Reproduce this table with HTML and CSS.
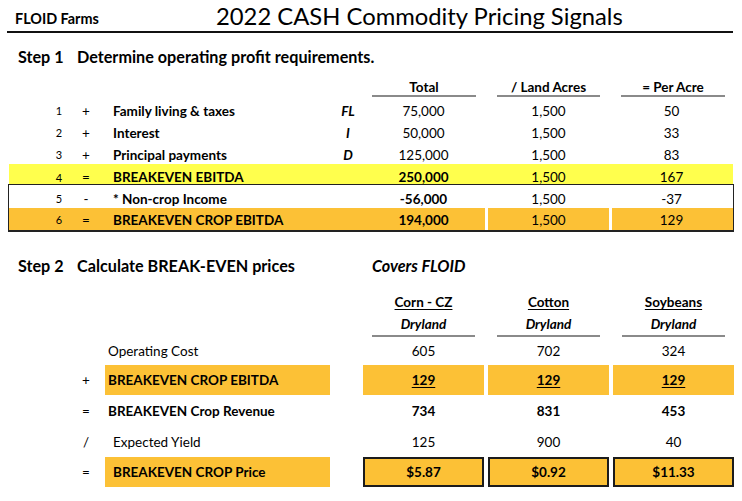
FILE: index.html
```html
<!DOCTYPE html>
<html>
<head>
<meta charset="utf-8">
<link rel="stylesheet" href="styles.css">
</head>
<body>
<div class="page">
  <header class="top">
    <div class="farm">FLOID Farms</div>
    <h1 class="title">2022 CASH Commodity Pricing Signals</h1>
  </header>

  <div class="step s1"><span class="step-no">Step 1</span><span>Determine operating profit requirements.</span></div>

  <div class="t1">
    <div class="row1 hdr">
      <span class="c-num"></span><span class="c-sign"></span><span class="c-label"></span><span class="c-code"></span>
      <span class="c-v1"><span class="ul">Total</span></span><span class="gap"></span>
      <span class="c-v2"><span class="ul">/ Land Acres</span></span><span class="gap"></span>
      <span class="c-v3"><span class="ul">= Per Acre</span></span>
    </div>
    <div class="row1 r-a">
      <span class="c-num">1</span><span class="c-sign">+</span><span class="c-label">Family living &amp; taxes</span><span class="c-code">FL</span>
      <span class="c-v1">75,000</span><span class="gap"></span><span class="c-v2">1,500</span><span class="gap"></span><span class="c-v3">50</span>
    </div>
    <div class="row1 r-a">
      <span class="c-num">2</span><span class="c-sign">+</span><span class="c-label">Interest</span><span class="c-code">I</span>
      <span class="c-v1">50,000</span><span class="gap"></span><span class="c-v2">1,500</span><span class="gap"></span><span class="c-v3">33</span>
    </div>
    <div class="row1 r-b">
      <span class="c-num">3</span><span class="c-sign">+</span><span class="c-label">Principal payments</span><span class="c-code">D</span>
      <span class="c-v1">125,000</span><span class="gap"></span><span class="c-v2">1,500</span><span class="gap"></span><span class="c-v3">83</span>
    </div>
    <div class="row1 r-yellow">
      <span class="c-num">4</span><span class="c-sign">=</span><span class="c-label">BREAKEVEN EBITDA</span><span class="c-code"></span>
      <span class="c-v1 b">250,000</span><span class="gap"></span><span class="c-v2">1,500</span><span class="gap"></span><span class="c-v3">167</span>
    </div>
    <div class="box">
      <div class="row1 r-5">
        <span class="c-num">5</span><span class="c-sign">-</span><span class="c-label">* Non-crop Income</span><span class="c-code"></span>
        <span class="c-v1 b">-56,000</span><span class="gap"></span><span class="c-v2">1,500</span><span class="gap"></span><span class="c-v3">-37</span>
      </div>
      <div class="row1 r-orange">
        <span class="c-num">6</span><span class="c-sign">=</span><span class="c-label">BREAKEVEN CROP EBITDA</span><span class="c-code"></span>
        <span class="c-v1 b">194,000</span><span class="gap white"></span><span class="c-v2">1,500</span><span class="gap white"></span><span class="c-v3">129</span>
      </div>
    </div>
  </div>

  <div class="step s2"><span class="step-no">Step 2</span><span class="step-text">Calculate BREAK-EVEN prices</span><span class="covers">Covers FLOID</span></div>

  <div class="t2">
    <div class="row2 crop">
      <span class="c2-sign"></span><span class="c2-label"></span>
      <span class="c2-v"><span class="u">Corn - CZ</span></span>
      <span class="c2-v"><span class="u">Cotton</span></span>
      <span class="c2-v"><span class="u">Soybeans</span></span>
    </div>
    <div class="row2 dry">
      <span class="c2-sign"></span><span class="c2-label"></span>
      <span class="c2-v"><span class="dl">Dryland</span></span>
      <span class="c2-v"><span class="dl">Dryland</span></span>
      <span class="c2-v"><span class="dl">Dryland</span></span>
    </div>
    <div class="row2 r2-op">
      <span class="c2-sign"></span><span class="c2-label">Operating Cost</span>
      <span class="c2-v">605</span><span class="c2-v">702</span><span class="c2-v">324</span>
    </div>
    <div class="row2 r2-eb">
      <span class="c2-sign">+</span><span class="c2-label fill b">BREAKEVEN CROP EBITDA</span>
      <span class="c2-v fill b"><span class="u">129</span></span>
      <span class="c2-v fill b"><span class="u">129</span></span>
      <span class="c2-v fill b"><span class="u">129</span></span>
    </div>
    <div class="row2 r2-rev">
      <span class="c2-sign">=</span><span class="c2-label b">BREAKEVEN Crop Revenue</span>
      <span class="c2-v b">734</span><span class="c2-v b">831</span><span class="c2-v b">453</span>
    </div>
    <div class="row2 r2-yield">
      <span class="c2-sign">/</span><span class="c2-label ind">Expected Yield</span>
      <span class="c2-v">125</span><span class="c2-v">900</span><span class="c2-v">40</span>
    </div>
    <div class="row2 r2-price">
      <span class="c2-sign">=</span><span class="c2-label fill b ind">BREAKEVEN CROP Price</span>
      <span class="c2-v fill b boxed">$5.87</span>
      <span class="c2-v fill b boxed">$0.92</span>
      <span class="c2-v fill b boxed">$11.33</span>
    </div>
  </div>
</div>
</body>
</html>
```

FILE: styles.css
```css
* { box-sizing: border-box; }
html, body { margin: 0; padding: 0; background: #fff; }
body {
  font-family: Lato, "Open Sans", sans-serif;
  color: #000;
  font-size: 13.5px;
}
.page { width: 742px; padding-left: 9px; }

.top {
  display: flex;
  align-items: flex-end;
  height: 33px;
  margin-left: -2px;
  width: 726px;
  border-bottom: 2px solid #111;
}
.farm {
  flex: 0 0 209px;
  padding-left: 8px;
  font-weight: 700;
  font-size: 14.4px;
  line-height: 16px;
  padding-bottom: 4px;
}
.title {
  margin: 0;
  font-weight: 400;
  font-size: 23.8px;
  line-height: 26px;
  padding-bottom: 2px;
}

.step {
  display: flex;
  font-weight: 700;
  font-size: 16.2px;
  line-height: 18px;
  padding-left: 9px;
}
.step-no { width: 59px; }
.s1 { margin-top: 15px; }
.s2 { margin-top: 25px; }
.step-text { width: 295px; }
.covers { font-style: italic; }

/* ---------- table 1 ---------- */
.t1 { width: 724px; margin-top: 14px; }
.row1 {
  display: grid;
  grid-template-columns: 38px 24px 30px 232px 30px 122px 3px 121px 3px 121px;
  align-items: center;
  height: 22px;
}
.row1 > span { white-space: nowrap; }
.c-num { grid-column: 2; text-align: center; font-size: 11px; }
.c-sign { text-align: center; }
.c-label { padding-left: 12px; font-weight: 700; }
.c-code { text-align: center; font-weight: 700; font-style: italic; }
.c-v1, .c-v2, .c-v3 { text-align: center; }
.c-v1 { padding-right: 1px; }
.c-v3 { padding-right: 2px; }
.b { font-weight: 700; }

.row1.hdr { height: 17px; align-items: stretch; font-weight: 700; }
.hdr .c-v1, .hdr .c-v2, .hdr .c-v3 { padding: 0 9px; }
.hdr .c-v3 { padding: 0 8px 0 9px; }
.ul {
  display: block;
  height: 17px;
  line-height: 14px;
  border-bottom: 2px solid #8a8a8a;
  text-align: center;
}
.row1.r-a { height: 22px; padding-top: 1px; }
.row1.hdr + .r-a { margin-top: 2px; }
.row1.r-b { height: 21px; padding-top: 2px; }
.row1.r-yellow { height: 20px; background: #ffff4d; padding-top: 5px; }

.box {
  border: 1px solid #222;
  border-bottom-width: 2px;
  width: 726px;
  margin-left: -1px;
}
.row1.r-5 { height: 23px; padding-top: 4px; }
.row1.r-orange { height: 22px; background: #fcc136; padding-top: 1px; }
.gap.white { background: #fff; align-self: stretch; margin-top: -1px; }

/* ---------- table 2 ---------- */
.t2 { width: 725px; margin-top: 16px; }
.row2 {
  display: grid;
  grid-template-columns: 62px 30px 4px 225px 33px 121px 4px 121px 4px 121px;
  align-items: center;
}
.row2 > span { white-space: nowrap; }
.c2-sign { grid-column: 2; text-align: center; align-self: center; }
.c2-label { grid-column: 4; padding-left: 3px; }
.c2-label.ind { padding-left: 8px; }
.c2-v { text-align: center; }
.c2-v:nth-of-type(3) { grid-column: 6; }
.c2-v:nth-of-type(4) { grid-column: 8; }
.c2-v:nth-of-type(5) { grid-column: 10; }
.u { text-decoration: underline; text-underline-offset: 1.5px; }

.row2.crop { height: 22px; font-weight: 700; line-height: 16px; }
.row2.dry { height: 24px; align-items: stretch; }
.dl {
  display: block;
  margin: 0 9px;
  font-weight: 700;
  font-style: italic;
  text-align: center;
  line-height: 16px;
  padding-top: 3px;
  height: 24px;
  border-bottom: 2px solid #8a8a8a;
}
.row2.r2-op { height: 28px; }
.row2.r2-eb { height: 30px; align-items: stretch; }
.row2.r2-rev { height: 31px; }
.row2.r2-yield { height: 31px; }
.row2.r2-price { height: 30px; align-items: stretch; }
.fill {
  background: #fcc136;
  display: flex;
  align-items: center;
}
.c2-v.fill { justify-content: center; }
.boxed { border: 2px solid #1c1c1c; }
```
